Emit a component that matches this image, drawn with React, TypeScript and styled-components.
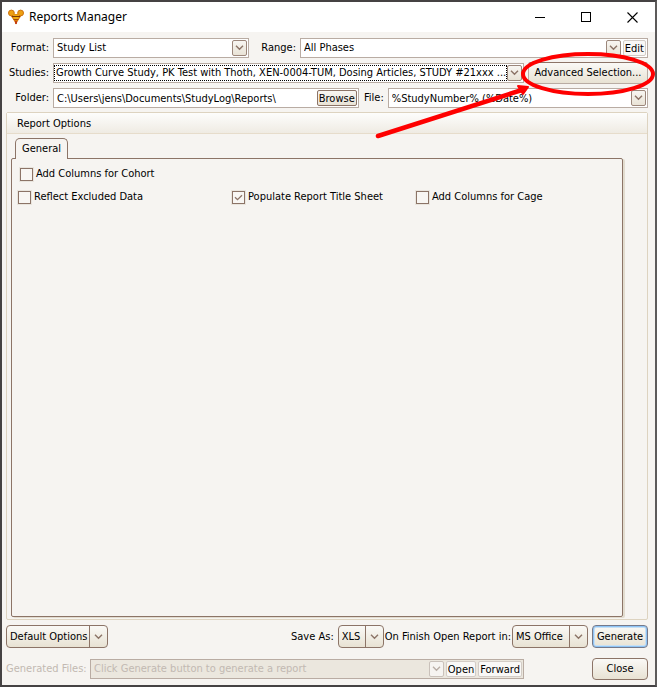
import React from "react";
import styled, { createGlobalStyle, css } from "styled-components";

const ink = "#000";
const brown = "#8c7467";
const fieldLine = "#b9aca3";
const face = "#f6f4f1";

const GlobalStyle = createGlobalStyle`
  *, *::before, *::after { box-sizing: border-box; }
  body { margin: 0; background: ${face}; }
  body, button, input, select {
    font-family: "DejaVu Sans Condensed", Tahoma, "DejaVu Sans", sans-serif;
    font-size: 11px;
    line-height: 14px;
    color: ${ink};
  }
  button, input, select { margin: 0; }
`;

const Window = styled.main`
  display: flex;
  flex-direction: column;
  min-height: 100vh;
  background: ${face};
  border: 2px solid #454243;
  border-right-color: #5d5b5b;
  overflow: hidden;
`;

const TitleBar = styled.header`
  display: flex;
  align-items: center;
  height: 30px;
  padding-left: 6px;
  background: #fff;
`;

const Title = styled.h1`
  flex: 1;
  margin: 0 0 0 5px;
  font: 400 12px/16px "Noto Sans", "Open Sans", sans-serif;
`;

const WindowButton = styled.button`
  display: grid;
  place-items: center;
  width: 46px;
  height: 28px;
  padding: 0;
  border: 0;
  background: transparent;
`;

const Body = styled.div`
  flex: 1;
  display: flex;
  flex-direction: column;
  gap: 4px;
  padding: 6px 7px 5px 4px;
`;

const Row = styled.div<{ $gap?: number }>`
  display: flex;
  align-items: center;
  gap: ${(p) => p.$gap ?? 4}px;
`;

const Label = styled.label<{ $width?: number; $disabled?: boolean }>`
  flex: none;
  width: ${(p) => (p.$width ? `${p.$width}px` : "auto")};
  text-align: right;
  white-space: nowrap;
  color: ${(p) => (p.$disabled ? "#c2b9b2" : ink)};
`;

const Field = styled.div<{ $width?: number; $grow?: number; $disabled?: boolean }>`
  display: flex;
  align-items: center;
  gap: 2px;
  min-width: 0;
  height: 20px;
  padding-right: 1px;
  border: 1px solid ${fieldLine};
  background: ${(p) => (p.$disabled ? "#ebe7de" : "#fff")};
  ${(p) => (p.$grow ? css`flex: ${p.$grow} 1 0;` : css`flex: 0 0 ${p.$width}px;`)}
`;

const SelectBox = styled.div`
  position: relative;
  flex: 1;
  min-width: 0;
  height: 18px;
`;

const Select = styled.select<{ $dotted?: boolean }>`
  appearance: none;
  display: block;
  width: ${(p) => (p.$dotted ? "calc(100% - 15px)" : "100%")};
  height: ${(p) => (p.$dotted ? "16px" : "18px")};
  margin: ${(p) => (p.$dotted ? "1px 0" : "0")};
  padding: 0 0 0 ${(p) => (p.$dotted ? "1px" : "3px")};
  border: ${(p) => (p.$dotted ? "1px dotted #000" : "0")};
  border-radius: 0;
  background: transparent;
  opacity: 1;
  outline: none;
  &:disabled { color: #c2b9b2; opacity: 1; }
`;

const TextInput = styled.input`
  flex: 1;
  min-width: 0;
  height: 18px;
  padding: 0 0 0 3px;
  border: 0;
  background: transparent;
  outline: none;
`;

const dropFace = css<{ $disabled?: boolean }>`
  display: grid;
  place-items: center;
  width: 15px;
  height: 16px;
  padding: 0;
  border: 1px solid ${(p) => (p.$disabled ? "#c9c1ba" : "#9c877b")};
  border-radius: 2px;
  background: ${(p) => (p.$disabled ? "#f6f4f1" : "linear-gradient(#f8f6f2, #e9e3d6)")};
`;

const DropMark = styled.span<{ $disabled?: boolean }>`
  ${dropFace}
  position: absolute;
  top: 1px;
  right: 0;
  pointer-events: none;
`;

const DropButton = styled.button<{ $disabled?: boolean }>`
  ${dropFace}
  flex: none;
`;

const InlineButton = styled.button<{ $flat?: boolean }>`
  flex: none;
  height: 16px;
  padding: 0 1px;
  line-height: 13px;
  border: 1px solid ${(p) => (p.$flat ? "#d3ccc6" : brown)};
  border-radius: 2px;
  background: ${(p) => (p.$flat ? "#f9f8f6" : "linear-gradient(#f8f6f2, #e9e3d6)")};
`;

const AdvancedSlot = styled.div`
  position: relative;
  flex: none;
  width: 120px;
  height: 22px;
`;

const AdvancedButton = styled.button`
  width: 100%;
  height: 100%;
  padding: 0;
  white-space: nowrap;
  border: 1px solid #b9aca3;
  border-top-color: ${brown};
  border-radius: 3px;
  background: linear-gradient(#faf9f6, #e8e2d3);
`;

const Callout = styled.svg`
  position: absolute;
  z-index: 2;
  top: -12px;
  right: -8px;
  pointer-events: none;
`;

const Group = styled.section`
  flex: 1;
  display: flex;
  flex-direction: column;
  border: 1px solid #ddd3c0;
  border-radius: 2px;
`;

const GroupTitle = styled.h2`
  height: 21px;
  margin: 0;
  padding: 4px 10px 0;
  font-size: 11px;
  font-weight: 400;
  line-height: 14px;
  border-bottom: 1px solid #e6dccb;
  background: linear-gradient(#fdfdfc, #efebe3);
`;

const GroupBody = styled.div`
  flex: 1;
  display: flex;
  flex-direction: column;
  padding: 4px 24px 2px 4px;
`;

const Tab = styled.button`
  position: relative;
  z-index: 1;
  align-self: flex-start;
  height: 21px;
  margin: 0 0 -1px 4px;
  padding: 0 6px;
  border: 1px solid ${brown};
  border-bottom: 0;
  border-radius: 5px 5px 0 0;
  background: ${face};
`;

const TabPanel = styled.div`
  flex: 1;
  padding: 8px 6px;
  border: 1px solid ${brown};
  border-radius: 2px;
  box-shadow: 2px 1px 0 #e2dccf;
`;

const CheckGrid = styled.div`
  display: grid;
  grid-template-columns: 214px 184px 1fr;
  margin-top: 9px;
`;

const CheckLabel = styled.label<{ $inset?: boolean }>`
  display: flex;
  align-items: center;
  gap: 3px;
  height: 14px;
  margin-left: ${(p) => (p.$inset ? 2 : 0)}px;
  white-space: nowrap;
`;

const CheckInput = styled.input`
  appearance: none;
  flex: none;
  width: 13px;
  height: 13px;
  border: 1px solid ${brown};
  background: #f8f6f3;
  box-shadow: 0 0 0 1px #e9e5de;
  &:checked {
    background: #f8f6f3
      url("data:image/svg+xml,%3Csvg xmlns='http://www.w3.org/2000/svg' viewBox='0 0 11 11'%3E%3Cpath d='M2 5.2 4.5 7.7 9 3.2' fill='none' stroke='%238c7467' stroke-width='1.3'/%3E%3C/svg%3E");
  }
`;

const Spacer = styled.div`
  flex: 1;
`;

const SplitSelect = styled.div<{ $width: number }>`
  position: relative;
  flex: none;
  width: ${(p) => p.$width}px;
  height: 23px;
  border: 1px solid ${brown};
  border-radius: 4px;
  background: linear-gradient(#faf9f6, #e8e2d3);
`;

const SplitControl = styled.select`
  appearance: none;
  display: block;
  width: 100%;
  height: 21px;
  padding: 0 18px 0 3px;
  border: 0;
  background: transparent;
  outline: none;
`;

const SplitMark = styled.span`
  position: absolute;
  top: 0;
  right: 0;
  bottom: 0;
  display: grid;
  place-items: center;
  width: 18px;
  border-left: 1px solid ${brown};
  pointer-events: none;
`;

const PushButton = styled.button<{ $primary?: boolean }>`
  flex: none;
  width: 56px;
  height: ${(p) => (p.$primary ? 23 : 22)}px;
  padding: 0;
  border: 1px solid ${brown};
  border-radius: 4px;
  background: linear-gradient(#faf9f6, #e8e2d3);
  ${(p) => p.$primary && css`
    border-color: #75798a;
    box-shadow: inset 0 0 0 1px #8fc4f5, inset 0 0 0 2px #c9e0f3;
  `}
`;

const Footer = styled.footer`
  display: flex;
  flex-direction: column;
  gap: 10px;
  padding-top: 1px;
`;

const CloseSlot = styled.div`
  flex: none;
  padding-left: 64px;
`;

const Chevron = ({ pale = false }: { pale?: boolean }) => (
  <svg width="9" height="6" viewBox="0 0 9 6" aria-hidden="true">
    <path d="M1 0.8 4.5 4.3 8 0.8" fill="none" stroke={pale ? "#b9aea6" : brown} strokeWidth="1.4" />
  </svg>
);

const Logo = () => (
  <svg width="16" height="16" viewBox="0 0 16 16" aria-hidden="true">
    <path d="M1.500 5 H14.500 L10.500 11 8 15.500 5.500 11Z" fill="#d9780c" />
    <circle cx="3.400" cy="4" r="2.900" fill="#eda012" stroke="#cf720e" />
    <circle cx="12.600" cy="4" r="2.900" fill="#eda012" stroke="#cf720e" />
    <path d="M5 5.500H11L10.500 9.500 8 11 5.500 9.500Z" fill="#efaa12" />
    <path d="M4 7.500H12" stroke="#7a3a08" strokeWidth="1" />
    <path d="M5.500 10.500H10.500" stroke="#a2480a" strokeWidth="1" />
    <path d="M8 12V15" stroke="#c0300c" strokeWidth="1.600" />
  </svg>
);

type PickProps = { id: string; value: string; label?: string; dotted?: boolean; disabled?: boolean };

const Pick = ({ id, value, label, dotted, disabled }: PickProps) => (
  <SelectBox>
    <Select id={id} aria-label={label} $dotted={dotted} disabled={disabled}>
      <option>{value}</option>
    </Select>
    <DropMark $disabled={disabled}>
      <Chevron pale={disabled} />
    </DropMark>
  </SelectBox>
);

const Split = ({ id, value, width, label }: { id: string; value: string; width: number; label?: string }) => (
  <SplitSelect $width={width}>
    <SplitControl id={id} aria-label={label}>
      <option>{value}</option>
    </SplitControl>
    <SplitMark>
      <Chevron />
    </SplitMark>
  </SplitSelect>
);

const Check = ({ text, checked, inset }: { text: string; checked?: boolean; inset?: boolean }) => (
  <CheckLabel $inset={inset}>
    <CheckInput type="checkbox" defaultChecked={checked} />
    {text}
  </CheckLabel>
);

export default function App() {
  return (
    <>
      <GlobalStyle />
      <Window>
        <TitleBar>
          <Logo />
          <Title>Reports Manager</Title>
          <WindowButton aria-label="Minimize">
            <svg width="11" height="11" viewBox="0 0 11 11"><path d="M0 5.5H10" stroke="#000" /></svg>
          </WindowButton>
          <WindowButton aria-label="Maximize">
            <svg width="11" height="11" viewBox="0 0 11 11"><rect x="0.5" y="0.5" width="9" height="9" fill="none" stroke="#000" /></svg>
          </WindowButton>
          <WindowButton aria-label="Close window">
            <svg width="11" height="11" viewBox="0 0 11 11"><path d="M0.5 0.5 10.5 10.5M10.5 0.5 0.5 10.5" stroke="#000" strokeWidth="1.1" /></svg>
          </WindowButton>
        </TitleBar>

        <Body>
          <Row>
            <Label htmlFor="format" $width={43}>Format:</Label>
            <Field $width={196}><Pick id="format" value="Study List" /></Field>
            <Label htmlFor="range" $width={43}>Range:</Label>
            <Field $grow={1}>
              <Pick id="range" value="All Phases" />
              <InlineButton $flat>Edit</InlineButton>
            </Field>
          </Row>

          <Row>
            <Label htmlFor="studies" $width={43}>Studies:</Label>
            <Field $grow={1}>
              <Pick
                id="studies"
                dotted
                value="Growth Curve Study, PK Test with Thoth, XEN-0004-TUM, Dosing Articles, STUDY #21xxx ..."
              />
            </Field>
            <AdvancedSlot>
              <AdvancedButton>Advanced Selection...</AdvancedButton>
              <Callout width="282" height="90" viewBox="0 0 282 90" aria-hidden="true">
                <ellipse cx="214" cy="24" rx="65" ry="20" fill="none" stroke="#fe0000" strokeWidth="4" />
                <path d="M4 86 148 40" stroke="#fe0000" strokeWidth="4.500" strokeLinecap="round" />
                <path d="M144 36 154 37 149 44Z" fill="#fe0000" stroke="#fe0000" strokeWidth="2" strokeLinejoin="round" />
              </Callout>
            </AdvancedSlot>
          </Row>

          <Row>
            <Label htmlFor="folder" $width={43}>Folder:</Label>
            <Field $grow={306}>
              <TextInput id="folder" defaultValue="C:\Users\jens\Documents\StudyLog\Reports\" />
              <InlineButton>Browse</InlineButton>
            </Field>
            <Label htmlFor="file" $width={21}>File:</Label>
            <Field $grow={260}>
              <TextInput id="file" defaultValue="%StudyNumber% (%Date%)" />
              <DropButton aria-label="File name choices"><Chevron /></DropButton>
            </Field>
          </Row>

          <Group>
            <GroupTitle>Report Options</GroupTitle>
            <GroupBody>
              <Tab role="tab" aria-selected="true" aria-controls="general">General</Tab>
              <TabPanel id="general" role="tabpanel" aria-label="General">
                <Check text="Add Columns for Cohort" inset />
                <CheckGrid>
                  <Check text="Reflect Excluded Data" />
                  <Check text="Populate Report Title Sheet" checked />
                  <Check text="Add Columns for Cage" />
                </CheckGrid>
              </TabPanel>
            </GroupBody>
          </Group>

          <Footer>
            <Row>
              <Split id="defaults" label="Default options" value="Default Options" width={102} />
              <Spacer />
              <Label htmlFor="save-as">Save As:</Label>
              <Row $gap={1}>
                <Split id="save-as" value="XLS" width={46} />
                <Label htmlFor="open-in">On Finish Open Report in:</Label>
                <Split id="open-in" value="MS Office" width={76} />
              </Row>
              <PushButton $primary>Generate</PushButton>
            </Row>
            <Row>
              <Label htmlFor="generated" $width={80} $disabled>Generated Files:</Label>
              <Field $grow={1} $disabled>
                <Pick id="generated" value="Click Generate button to generate a report" disabled />
                <InlineButton $flat>Open</InlineButton>
                <InlineButton $flat>Forward</InlineButton>
              </Field>
              <CloseSlot>
                <PushButton>Close</PushButton>
              </CloseSlot>
            </Row>
          </Footer>
        </Body>
      </Window>
    </>
  );
}
